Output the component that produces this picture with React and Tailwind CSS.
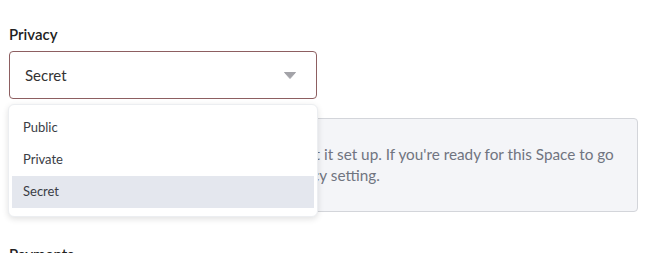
import { useState } from 'react';

const options = ['Public', 'Private', 'Secret'];

export default function App() {
  const [value, setValue] = useState('Secret');

  return (
    <div className="bg-white min-h-screen px-[9px] pt-[24px] font-['Lato','Noto_Sans',sans-serif]">
      <div className="relative w-[629px]">
        <label className="block text-[15px] leading-[20px] font-semibold text-[#222] mb-[7px]">Privacy</label>
        <div className="w-[308px] h-[48px] rounded-[4px] border border-[#8d5f61] flex items-center justify-between pl-[15px] pr-[20px]">
          <span className="text-[15px] text-[#333]">{value}</span>
          <svg width="12" height="7" viewBox="0 0 12 7" className="text-[#a3a3a8]">
            <path d="M0.5 0.5h11L6 6.5z" fill="currentColor" stroke="currentColor" strokeLinejoin="round" />
          </svg>
        </div>

        <div className="mt-[19px] rounded-[4px] border border-[#d3d5da] bg-[#f4f5f8] pl-[21px] py-[25px] text-[15.3px] leading-[21px] text-[#707480] whitespace-nowrap">
          Whilst this Space is Secret, take time to get it set up. If you're ready for this Space to go<br />
          public or private, simply change your privacy setting.
        </div>

        <h2 className="mt-[32px] text-[15px] leading-[20px] font-semibold text-[#222]">Payments</h2>

        <ul className="absolute left-[-1px] top-[80px] w-[310px] rounded-[6px] bg-white border border-[#eceef1] shadow-[0_2px_6px_rgba(0,0,0,0.12)] pt-[4px] pb-[8px] px-[3px]">
          {options.map((o) => (
            <li
              key={o}
              onClick={() => setValue(o)}
              className={`h-[32px] flex items-center pl-[11px] text-[13px] text-[#3a3d45] ${o === value ? 'bg-[#e4e7ee]' : ''} ${o === 'Public' ? 'mt-[3px]' : ''}`}
            >
              {o}
            </li>
          ))}
        </ul>
      </div>
    </div>
  );
}
